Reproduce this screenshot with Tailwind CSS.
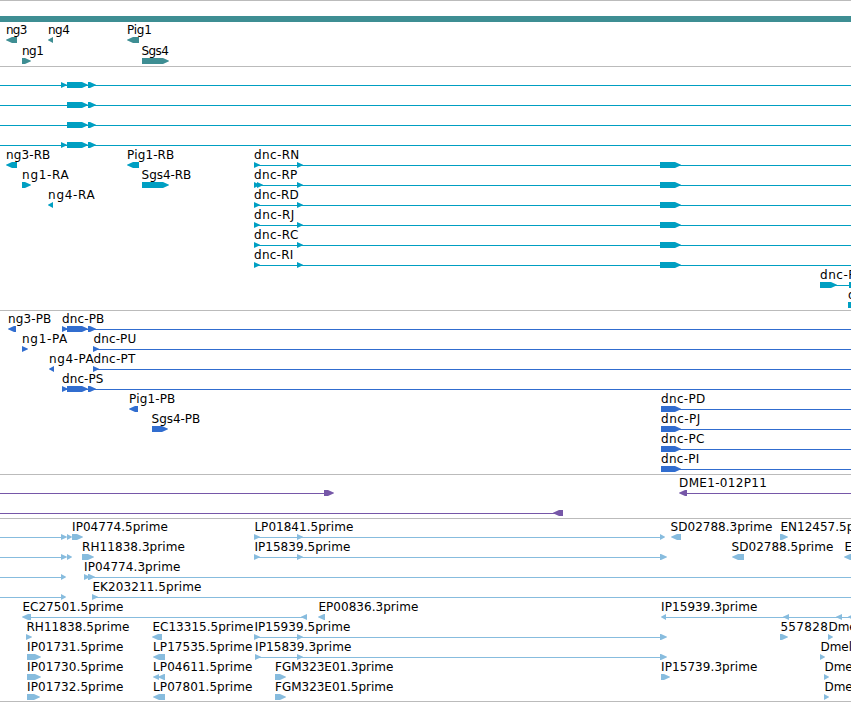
<!DOCTYPE html>
<html lang="en">
<head>
    <meta charset="UTF-8">
    <meta name="viewport" content="width=device-width, initial-scale=1.0">
    <title>Genome Browser</title>
    <script src="https://cdn.jsdelivr.net/npm/@tailwindcss/browser@4"></script>
</head>
<body class="bg-white overflow-hidden">
    <main class="flex flex-col w-[851px] h-[702px] overflow-hidden font-['DejaVu_Sans',sans-serif] text-[12px]">
        <section class="h-[66px] shrink-0 border-t border-[#bbbbbb] pt-[15px] text-[#3e8e93]">
            <div class="h-1.5 mb-[3px] bg-[#3e8e93]"></div>
            <div id="genes" class="flex flex-col gap-px"></div>
        </section>
        <section id="transcripts" class="h-[244px] shrink-0 border-t border-[#bbbbbb] pt-[3px] text-[#009fc2]"></section>
        <section id="proteins" class="h-[164px] shrink-0 border-t border-[#bbbbbb] pt-[3px] text-[#316dcf]"></section>
        <section id="clones" class="h-[44px] shrink-0 border-t border-[#bbbbbb] pt-[3px] text-[#7657a8]"></section>
        <section id="ests" class="h-[184px] shrink-0 border-y border-[#bbbbbb] pt-[3px] text-[#87bcde]"></section>
    </main>

    <script>
        // lines: [from, to]; arrows: [tail, tip]; labels: [left, right, text], right = 0 when cut off by the edge
        const exons = [[67, 88], [88, 96]];
        const dnc = [[254, 260], [297, 303], [660, 681]];
        const est = [[254, 260], [297, 303], [660, 667]];

        const tracks = {
            genes: [
                { arrows: [[17, 6], [53, 48], [139, 127]], labels: [[6.5, 26.5, 'ng3'], [48.5, 69, 'ng4'], [127.5, 151, 'Pig1']] },
                { arrows: [[22, 31], [142, 169]], labels: [[22.5, 43, 'ng1'], [142, 168, 'Sgs4']] }
            ],
            transcripts: [
                { lines: [[0, 851]], arrows: [[61, 67], ...exons] },
                { lines: [[0, 851]], arrows: exons },
                { lines: [[0, 851]], arrows: exons },
                { lines: [[0, 851]], arrows: [[61, 67], ...exons] },
                { lines: [[254, 851]], arrows: [[17, 6], [139, 127], ...dnc], labels: [[6.5, 49.5, 'ng3-RB'], [127.5, 173.5, 'Pig1-RB'], [254.5, 298.5, 'dnc-RN']] },
                { lines: [[254, 851]], arrows: [[22, 31], [142, 169], [257, 263], ...dnc], labels: [[22.5, 68, 'ng1-RA'], [142, 190.5, 'Sgs4-RB'], [254.5, 296.5, 'dnc-RP']] },
                { lines: [[254, 851]], arrows: [[53, 48], ...dnc], labels: [[48.5, 94, 'ng4-RA'], [254.5, 298, 'dnc-RD']] },
                { lines: [[254, 851]], arrows: dnc, labels: [[254.5, 293.5, 'dnc-RJ']] },
                { lines: [[254, 851]], arrows: dnc, labels: [[254.5, 297.5, 'dnc-RC']] },
                { lines: [[254, 851]], arrows: dnc, labels: [[254.5, 292.5, 'dnc-RI']] },
                { lines: [[820, 851]], arrows: [[820, 837], [849, 870]], labels: [[820.5, 864, 'dnc-RA']] },
                { arrows: [[848, 870]], labels: [[848.5, 0, 'dnc-RL']] }
            ],
            proteins: [
                { lines: [[62, 851]], arrows: [[16, 8], [62, 68], ...exons], labels: [[8.5, 50.5, 'ng3-PB'], [62.5, 103.5, 'dnc-PB']] },
                { lines: [[93, 851]], arrows: [[22, 28], [93, 99]], labels: [[22.5, 66.5, 'ng1-PA'], [93.8, 135.5, 'dnc-PU']] },
                { lines: [[93, 851]], arrows: [[54, 49], [93, 99]], labels: [[49.5, 93, 'ng4-PA'], [93.8, 134.5, 'dnc-PT']] },
                { lines: [[62, 851]], arrows: [[62, 68], ...exons], labels: [[62.5, 102.5, 'dnc-PS']] },
                { lines: [[661, 851]], arrows: [[138, 129], [661, 681]], labels: [[129.5, 174.5, 'Pig1-PB'], [661.5, 704.5, 'dnc-PD']] },
                { lines: [[661, 851]], arrows: [[152, 168], [661, 681]], labels: [[152, 199.5, 'Sgs4-PB'], [661.5, 699.5, 'dnc-PJ']] },
                { lines: [[661, 851]], arrows: [[661, 681]], labels: [[661.5, 703.5, 'dnc-PC']] },
                { lines: [[661, 851]], arrows: [[661, 681]], labels: [[661.5, 698.5, 'dnc-PI']] }
            ],
            clones: [
                { lines: [[0, 330], [683, 851]], arrows: [[324, 334], [687, 679]], labels: [[679.5, 766, 'DME1-012P11']] },
                { lines: [[0, 557]], arrows: [[563, 553]] }
            ],
            ests: [
                { lines: [[0, 65], [254, 664]], arrows: [[61, 67], [67, 72], [72, 83], [254, 260], [297, 303], [660, 665], [681, 671], [780, 788]], labels: [[72.5, 167, 'IP04774.5prime'], [254.8, 352.5, 'LP01841.5prime'], [671, 771.5, 'SD02788.3prime'], [780.8, 881, 'EN12457.5prime']] },
                { lines: [[0, 65], [254, 664]], arrows: [[61, 67], [67, 72], [82, 94], ...est, [744, 732], [856, 844]], labels: [[82.5, 184, 'RH11838.3prime'], [254.8, 349.5, 'IP15839.5prime'], [732, 832.5, 'SD02788.5prime'], [844.8, 0, 'EN12457.3prime']] },
                { lines: [[0, 65], [88, 851]], arrows: [[61, 66], [84, 90], [88, 95]], labels: [[84.5, 179.5, 'IP04774.3prime']] },
                { lines: [[0, 65], [92, 851]], arrows: [[61, 66], [92, 98]], labels: [[92.8, 200.5, 'EK203211.5prime']] },
                { lines: [[25, 303], [663, 849]], arrows: [[31, 22], [307, 301], [325, 318], [666, 661], [789, 783], [842, 836], [854, 848]], labels: [[22.8, 122.5, 'EC27501.5prime'], [318.8, 417.5, 'EP00836.3prime'], [661.5, 756.5, 'IP15939.3prime']] },
                { lines: [[254, 664]], arrows: [[26, 32], [162, 152], ...est, [780, 788], [828, 833]], labels: [[26.8, 128.5, 'RH11838.5prime'], [152.8, 252.5, 'EC13315.5prime'], [254.8, 349.5, 'IP15939.5prime'], [780.8, 827, '557828'], [828.8, 0, 'Dmel']] },
                { lines: [[255, 664]], arrows: [[27, 41], [165, 153], [255, 261], [297, 303], [660, 667], [820, 825]], labels: [[27.5, 122.5, 'IP01731.5prime'], [153.5, 251.5, 'LP17535.5prime'], [255.5, 350.5, 'IP15839.3prime'], [820.8, 0, 'Dmel']] },
                { arrows: [[27, 41], [159, 153], [165, 158], [275, 286], [661, 670], [824, 829]], labels: [[27.5, 122.5, 'IP01730.5prime'], [153.5, 251.5, 'LP04611.5prime'], [275.5, 392.5, 'FGM323E01.3prime'], [661.5, 756.5, 'IP15739.3prime'], [824.8, 0, 'Dmel']] },
                { arrows: [[27, 40], [165, 153], [275, 286], [824, 829]], labels: [[27.5, 122.5, 'IP01732.5prime'], [153.5, 251.5, 'LP07801.5prime'], [275.5, 392.5, 'FGM323E01.5prime'], [824.8, 0, 'Dmel']] }
            ]
        };

        function arrow([tail, tip]) {
            const head = Math.min(6, Math.abs(tip - tail));
            const neck = tip > tail ? tip - head : tip + head;
            return `<polygon points="${tail},12 ${neck},12 ${tip},14.7 ${tip},15.3 ${neck},18 ${tail},18"/>`;
        }

        function label([left, right, text]) {
            const fit = right ? `textLength="${right - left + 1.2}"` : '';
            return `<text class="fill-black" x="${left - 0.4}" y="9" ${fit}>${text}</text>`;
        }

        function row({ lines = [], arrows = [], labels = [] }) {
            return `<svg class="block w-[851px] h-5 shrink-0 overflow-visible" fill="currentColor">
                ${lines.map(([a, b]) => `<rect x="${a}" y="15" width="${b - a}" height="1"/>`).join('')}
                ${arrows.map(arrow).join('')}
                ${labels.map(label).join('')}
            </svg>`;
        }

        for (const id in tracks) {
            document.getElementById(id).innerHTML = tracks[id].map(row).join('');
        }
    </script>
</body>
</html>
